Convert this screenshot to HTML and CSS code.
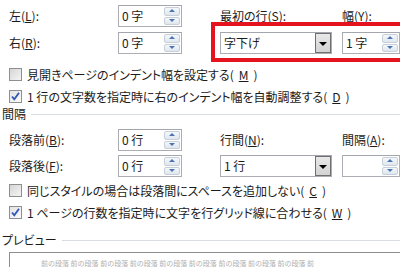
FILE: index.html
```html
<!DOCTYPE html>
<html lang="ja">
<head>
    <meta charset="UTF-8">
    <title>段落</title>
    <link rel="stylesheet" href="styles.css">
</head>
<body>
    <div class="dialog">
        <!-- インデント -->
        <div class="field-grid">
            <span class="label">左(<u>L</u>):</span>
            <div class="spin-box"><span class="value">0 字</span><span class="spinner"><span class="spin-up"></span><span class="spin-down"></span></span></div>
            <span class="label">最初の行(S):</span>
            <span class="label">幅(Y):</span>

            <span class="label">右(<u>R</u>):</span>
            <div class="spin-box"><span class="value">0 字</span><span class="spinner"><span class="spin-up"></span><span class="spin-down"></span></span></div>
            <div class="combo"><span class="value">字下げ</span><span class="combo-btn"></span></div>
            <div class="spin-box spin-wide"><span class="value">1 字</span><span class="spinner"><span class="spin-up"></span><span class="spin-down"></span></span></div>
        </div>

        <div class="check-list">
            <div class="check-row"><span class="checkbox"></span>見開きページのインデント幅を設定する(<u>M</u>)</div>
            <div class="check-row"><span class="checkbox checked"><svg viewBox="0 0 11 11" width="11" height="11"><path d="M2 5.5 L4.3 8.3 L9 1.8" fill="none" stroke="#2f55b5" stroke-width="1.8"/></svg></span>1 行の文字数を指定時に右のインデント幅を自動調整する(<u>D</u>)</div>
        </div>

        <div class="group-title">間隔</div>

        <div class="field-grid field-grid-tight">
            <span class="label">段落前(<u>B</u>):</span>
            <div class="spin-box"><span class="value">0 行</span><span class="spinner"><span class="spin-up"></span><span class="spin-down"></span></span></div>
            <span class="label">行間(<u>N</u>):</span>
            <span class="label">間隔(<u>A</u>):</span>

            <span class="label">段落後(<u>F</u>):</span>
            <div class="spin-box"><span class="value">0 行</span><span class="spinner"><span class="spin-up"></span><span class="spin-down"></span></span></div>
            <div class="combo"><span class="value">1 行</span><span class="combo-btn"></span></div>
            <div class="spin-box spin-wide"><span class="value"></span><span class="spinner"><span class="spin-up"></span><span class="spin-down"></span></span></div>
        </div>

        <div class="check-list check-list-low">
            <div class="check-row"><span class="checkbox"></span>同じスタイルの場合は段落間にスペースを追加しない(<u>C</u>)</div>
            <div class="check-row"><span class="checkbox checked"><svg viewBox="0 0 11 11" width="11" height="11"><path d="M2 5.5 L4.3 8.3 L9 1.8" fill="none" stroke="#2f55b5" stroke-width="1.8"/></svg></span>1 ページの行数を指定時に文字を行グリッド線に合わせる(<u>W</u>)</div>
        </div>

        <div class="group-title group-preview">プレビュー</div>

        <div class="preview">
            <p class="preview-text">前の段落 前の段落 前の段落 前の段落 前の段落 前の段落 前の段落 前の段落 前の段落 前</p>
        </div>

        <!-- 注目枠 -->
        <div class="highlight"></div>
    </div>
</body>
</html>
```

FILE: styles.css
```css
body {
    margin: 0;
    width: 400px;
    height: 267px;
    overflow: hidden;
    background-color: #fff;
    color: #1b1b1b;
    font-family: "Noto Sans CJK JP", sans-serif;
    font-size: 12px;
    font-feature-settings: "palt";
}

.dialog {
    position: relative;
    padding-top: 5px;
}

u {
    text-decoration-thickness: 1px;
    text-underline-offset: 1px;
}

/* ラベルと入力欄の表 */
.field-grid {
    display: grid;
    grid-template-columns: 109px 102px 122px 58px;
    grid-template-rows: 22px 22px;
    row-gap: 5px;
    padding-left: 9px;
    align-items: center;
}

.field-grid-tight {
    row-gap: 4px;
    margin-top: 8px;
}

.label {
    white-space: nowrap;
    line-height: 14px;
}

.spin-box,
.combo {
    position: relative;
    height: 22px;
    box-sizing: border-box;
    border: 1px solid #abadb3;
    border-top-color: #a3a6ad;
    background-color: #fff;
    display: flex;
    align-items: center;
}

.spin-box {
    width: 64px;
}

.spin-wide {
    width: 58px;
}

.combo {
    width: 112px;
}

.value {
    padding-left: 3px;
    line-height: 14px;
    white-space: nowrap;
}

.spinner {
    position: absolute;
    top: 1px;
    right: 1px;
    bottom: 1px;
    width: 16px;
    display: flex;
    flex-direction: column;
    gap: 1px;
}

.spin-up,
.spin-down {
    flex: 1;
    position: relative;
    box-sizing: border-box;
    border: 1px solid #c7cfd9;
    border-radius: 2px;
    background: linear-gradient(#f5f8fb, #dfe6ee);
}

.spin-up::after,
.spin-down::after {
    content: "";
    position: absolute;
    left: 50%;
    top: 50%;
    margin-left: -3px;
    margin-top: -2px;
    border-left: 3px solid transparent;
    border-right: 3px solid transparent;
}

.spin-up::after {
    border-bottom: 3px solid #4a74b4;
}

.spin-down::after {
    border-top: 3px solid #4a74b4;
}

.combo-btn {
    position: absolute;
    top: 0;
    right: 0;
    bottom: 0;
    width: 16px;
    box-sizing: border-box;
    border: 1px solid #6f6f6f;
    background: linear-gradient(#e8e8e8, #d3d3d3);
}

.combo-btn::after {
    content: "";
    position: absolute;
    left: 50%;
    top: 50%;
    margin-left: -4px;
    margin-top: -1px;
    border-left: 4px solid transparent;
    border-right: 4px solid transparent;
    border-top: 4px solid #000;
}

/* チェックボックス */
.check-list {
    padding-left: 9px;
    margin-top: 9px;
}

.check-list-low {
    margin-top: 2px;
}

.check-row {
    display: flex;
    align-items: center;
    gap: 5px;
    height: 22px;
    white-space: nowrap;
}

.checkbox {
    width: 13px;
    height: 13px;
    box-sizing: border-box;
    border: 1px solid #8e8f8f;
    background: linear-gradient(135deg, #d6d6d6, #f4f4f4);
    display: flex;
    align-items: center;
    justify-content: center;
    flex-shrink: 0;
}

.checkbox.checked {
    background: linear-gradient(135deg, #e4e4e4, #fbfbfb);
}

/* 見出し */
.group-title {
    display: flex;
    align-items: center;
    gap: 5px;
    height: 14px;
    line-height: 14px;
    padding-left: 2px;
}

.group-title::after {
    content: "";
    flex: 1;
    height: 1px;
    background-color: #d5dfe5;
}

.group-preview {
    margin-top: 10px;
}

.group-preview::after {
    background-color: #d9dde2;
}

/* プレビュー */
.preview {
    margin-top: 5px;
    margin-left: 9px;
    width: 391px;
    height: 15px;
    box-sizing: border-box;
    border: 1px solid #8d8d8d;
    border-right: 0;
    border-bottom: 0;
    padding: 7px 0 0 31px;
    font-size: 7px;
    line-height: 7px;
}

.preview-text {
    margin: 0;
    font-size: 7px;
    line-height: 7px;
    color: #b0b0b0;
    white-space: nowrap;
    word-spacing: 0;
    font-feature-settings: normal;
}

/* 赤枠 */
.highlight {
    position: absolute;
    left: 211px;
    top: 22px;
    width: 195px;
    height: 32px;
    border: 4px solid #e5131d;
}
```
